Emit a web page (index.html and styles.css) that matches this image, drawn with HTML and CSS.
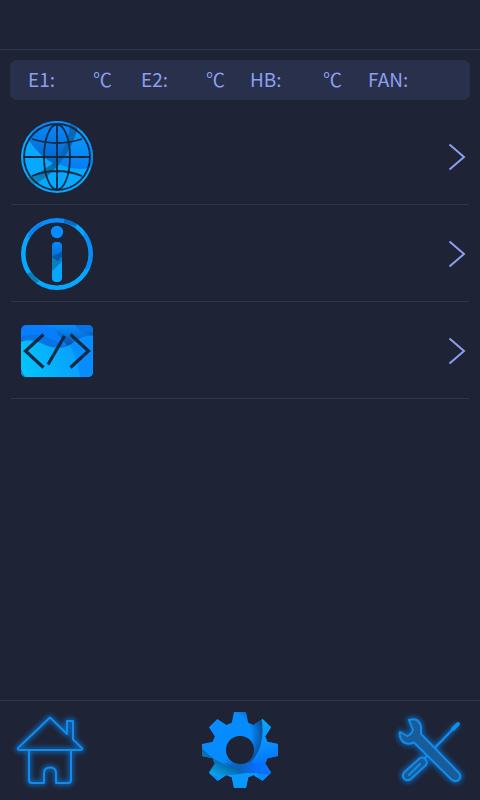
FILE: index.html
```html
<!DOCTYPE html>
<html lang="en">
<head>
<meta charset="utf-8">
<title>Printer settings</title>
<link rel="stylesheet" href="styles.css">
</head>
<body>
<header class="topbar"></header>
<main class="content">
  <div class="status">
    <span>E1:</span><span>℃</span><span>E2:</span><span>℃</span><span>HB:</span><span>℃</span><span>FAN:</span>
  </div>
  <div class="row">
    <svg class="icon" viewBox="0 0 72 72">
      <defs>
        <clipPath id="disc"><circle cx="36" cy="36" r="36"/></clipPath>
        <linearGradient id="g1" x1="0" y1="0" x2="0" y2="1"><stop offset="0" stop-color="#078cff"/><stop offset="1" stop-color="#0362c8"/></linearGradient>
        <linearGradient id="g2" x1="0" y1="0" x2="0" y2="1"><stop offset="0" stop-color="#08a4ff"/><stop offset="1" stop-color="#087cf0"/></linearGradient>
        <linearGradient id="g3" x1="1" y1="0" x2="0" y2="1"><stop offset="0" stop-color="#07609c"/><stop offset="1" stop-color="#079bd0"/></linearGradient>
      </defs>
      <g clip-path="url(#disc)">
        <rect width="72" height="72" fill="#06a9ff"/>
        <path d="M7 18L18 0H58Q53 25 37 45Q18 36 7 18Z" fill="url(#g1)"/>
        <path d="M49 0L59 0Q54 26 37 45L38 36Q49 19 49 0Z" fill="#0768b8"/>
        <path d="M58 0Q54 25 38 43Q54 51 72 46V0Z" fill="url(#g2)"/>
        <path d="M0 60Q22 51 36 39L38 43Q28 57 10 65Z" fill="url(#g3)"/>
      </g>
      <g fill="none" stroke="#142942" stroke-width="1.8">
        <circle cx="36" cy="36" r="33"/>
        <path d="M36 3V69M3 36H69M11 18Q36 26 61 18M11 55Q36 45 61 55"/>
        <ellipse cx="36" cy="36" rx="13" ry="32.5"/>
      </g>
    </svg>
    <svg class="chevron" viewBox="0 0 18 28"><path d="M1.5 1.5L16 14L1.5 26.5"/></svg>
  </div>
  <div class="row">
    <svg class="icon" viewBox="0 0 72 72">
      <defs>
        <mask id="ring"><circle cx="36" cy="36" r="33.7" fill="none" stroke="#fff" stroke-width="4.6"/></mask>
        <clipPath id="stem"><rect x="31" y="24" width="10" height="40" rx="4.5"/></clipPath>
      </defs>
      <g mask="url(#ring)">
        <rect width="72" height="72" fill="#06a7ff"/>
        <path d="M7 18L12 0H58L54 10Q28 19 7 18Z" fill="#078cff"/>
        <path d="M6 20L15 8L21 5Q16 15 7 20Z" fill="#0880ee"/>
        <path d="M43 0H58L55 8L43 5Z" fill="#0868cb"/>
        <path d="M63 10H72V49L64 52Z" fill="#078cf8"/>
        <path d="M3 57L10 54L18 63L13 67Z" fill="#087eb9"/>
      </g>
      <circle cx="36" cy="14" r="6.2" fill="#078cff"/>
      <g clip-path="url(#stem)">
        <rect x="30" y="22" width="12" height="44" fill="#06a7ff"/>
        <rect x="30" y="22" width="12" height="24" fill="url(#g1)"/>
        <path d="M30 39L37 43L42 37V40Q38 48 30 54Z" fill="#087fbb"/>
        <path d="M31 39L37 43L42 37V33Z" fill="#0758a5"/>
        <path d="M42 40Q38 49 30 54V64H42Z" fill="#06a7ff"/>
      </g>
    </svg>
    <svg class="chevron" viewBox="0 0 18 28"><path d="M1.5 1.5L16 14L1.5 26.5"/></svg>
  </div>
  <div class="row">
    <svg class="icon code" viewBox="0 0 72 52">
      <defs>
        <clipPath id="card"><rect width="72" height="52" rx="5"/></clipPath>
        <linearGradient id="c1" x1="0" y1=".6" x2="1" y2=".4"><stop offset="0" stop-color="#02c4fa"/><stop offset=".7" stop-color="#08a2ff"/><stop offset="1" stop-color="#0698ff"/></linearGradient>
        <linearGradient id="c2" x1=".2" y1="0" x2=".6" y2="1"><stop offset="0" stop-color="#0788fa"/><stop offset="1" stop-color="#0650a0"/></linearGradient>
        <linearGradient id="c3" x1="0" y1="0" x2="0" y2="1"><stop offset="0" stop-color="#088cff"/><stop offset="1" stop-color="#0665c8"/></linearGradient>
      </defs>
      <g clip-path="url(#card)">
        <rect width="72" height="52" fill="#087dff"/>
        <path d="M0 12Q12 7 25 12T47 22L44 27H0Z" fill="#0874e4"/>
        <path d="M24 0Q35 4 46 21L53 19Q61 11 72 11V0Z" fill="url(#c2)"/>
        <path d="M24 0H54Q60 9 72 10V13Q59 13 53 18Q41 4 24 0Z" fill="url(#c3)"/>
        <path d="M54 0Q60 9 72 7V0Z" fill="#0874e4"/>
        <path d="M0 17Q10 13 24 20Q40 27 52 18Q60 11 72 11V52H0Z" fill="url(#c1)"/>
        <path d="M49 20Q60 10 72 11V52H59Q57 34 49 20Z" fill="#068dff"/>
        <path d="M0 42Q0 48 5 52H0Z" fill="#087ce6"/>
      </g>
      <path d="M22.5 9.5L4.5 26L22.5 42.5M49.5 9.5L67.5 26L49.5 42.5M43.500 11L27 39.500" fill="none" stroke="#142942" stroke-width="3.2"/>
    </svg>
    <svg class="chevron" viewBox="0 0 18 28"><path d="M1.5 1.5L16 14L1.5 26.5"/></svg>
  </div>
</main>
<nav class="nav">
  <svg class="tab" viewBox="0 0 100 99">
    <defs>
      <path id="house" d="M50 16.500L18 47Q17 49 20 49H80Q83 49 82 47L73 38.500V20H67V33ZM29 49V79Q29 82 32 82H44V72Q44 66.500 50 66.500T56 72V82H68Q71 82 71 79V49"/>
    </defs>
    <use href="#house" class="halo"/>
    <use href="#house" class="neon"/>
  </svg>
  <svg class="tab" viewBox="0 0 100 99">
    <defs>
      <clipPath id="gear">
        <path d="M44 11H56L58.500 23H41.500Z"/>
        <path d="M44 11H56L58.500 23H41.500Z" transform="rotate(45 50 49)"/>
        <path d="M44 11H56L58.500 23H41.500Z" transform="rotate(90 50 49)"/>
        <path d="M44 11H56L58.500 23H41.500Z" transform="rotate(135 50 49)"/>
        <path d="M44 11H56L58.500 23H41.500Z" transform="rotate(180 50 49)"/>
        <path d="M44 11H56L58.500 23H41.500Z" transform="rotate(225 50 49)"/>
        <path d="M44 11H56L58.500 23H41.500Z" transform="rotate(270 50 49)"/>
        <path d="M44 11H56L58.500 23H41.500Z" transform="rotate(315 50 49)"/>
        <circle cx="50" cy="49" r="28.500"/>
      </clipPath>
      <linearGradient id="s1" gradientUnits="userSpaceOnUse" x1="34" y1="58" x2="25" y2="74"><stop offset="0" stop-color="#075a9c"/><stop offset="1" stop-color="#08a2e8"/></linearGradient>
      <radialGradient id="s2" gradientUnits="userSpaceOnUse" cx="38" cy="34" r="35"><stop offset=".65" stop-color="#07509a" stop-opacity="0"/><stop offset="1" stop-color="#07509a"/></radialGradient>
      <linearGradient id="s3" gradientUnits="userSpaceOnUse" x1="50" y1="66" x2="84" y2="66"><stop offset="0" stop-color="#0864bb"/><stop offset=".5" stop-color="#086cff"/><stop offset="1" stop-color="#087cff"/></linearGradient>
      <linearGradient id="s4" gradientUnits="userSpaceOnUse" x1="70" y1="20" x2="82" y2="66"><stop offset="0" stop-color="#08a8f5"/><stop offset=".5" stop-color="#0890ff"/><stop offset="1" stop-color="#076cff"/></linearGradient>
    </defs>
    <g clip-path="url(#gear)">
      <rect width="100" height="99" fill="#078cff"/>
      <path d="M70 10Q78 43 61 61L52 67L60 73H92V10Z" fill="url(#s4)"/>
      <path d="M42 10H70Q78 43 61 61L52 67Q38 64 30 55L50 49Z" fill="url(#s2)"/>
      <path d="M8 43Q27 66 54 68L58 73Q34 77 10 73Z" fill="url(#s1)"/>
      <path d="M32 60Q46 68 61 61L84 66L82 72H58Q43 70 32 60Z" fill="url(#s3)"/>
      <path d="M28 75Q44 74 55 72H68V90H28Z" fill="#0798ff"/>
    </g>
    <circle cx="50" cy="49" r="14" fill="#1e2336"/>
  </svg>
  <svg class="tab" viewBox="0 0 100 99">
    <defs>
      <path id="driver" d="M39 58Q42 55 45 58T46 64L32 77Q28 81 24.500 78T24.500 71Z"/>
      <path id="wrench" d="M29 19Q38 16 41 25V33L78.500 71.500Q82 75 79 78.500T71.500 78.500L34 41.500Q25 45 21 38Q19 34 20 31L27 35Q31 34 33 29Z"/>
    </defs>
    <g class="halo"><path d="M78 23L44 58"/><use href="#driver"/><use href="#wrench"/></g>
    <g class="neon">
      <path d="M78 23L73 28" stroke-width="4"/>
      <path d="M75 26L44 58" stroke-width="2.500"/>
      <use href="#driver" class="fill"/>
      <path d="M40 63L29 74"/>
      <use href="#wrench" class="fill"/>
    </g>
  </svg>
</nav>
</body>
</html>
```
FILE: styles.css
```css
* { box-sizing: border-box; }
body {
  margin: 0;
  height: 800px;
  display: flex;
  flex-direction: column;
  background: #1e2336;
  font-family: "Noto Sans CJK SC", sans-serif;
  overflow: hidden;
}
svg { display: block; }
.topbar { height: 50px; border-bottom: 1px solid #30374a; }
.content { flex: 1; padding: 10px 10px 0; }
.status {
  display: grid;
  grid-template-columns: 65px 48px 65px 44px 73px 45px 1fr;
  align-items: center;
  height: 40px;
  padding: 0 0 2px 18px;
  border-radius: 7px;
  background: #28304c;
  color: #8c9ff0;
  font-size: 19px;
  line-height: 38px;
  white-space: nowrap;
}
.row {
  display: flex;
  align-items: center;
  justify-content: space-between;
  height: 97px;
  margin: 0 1px;
  padding: 1px 3px 0 10px;
  border-bottom: 1px solid #30364a;
}
.status + .row { height: 105px; padding-top: 9px; }
.icon { width: 72px; height: 72px; }
.code { height: 52px; }
.chevron { width: 18px; height: 28px; fill: none; stroke: #8c9ff0; stroke-width: 2; }
.nav {
  display: flex;
  justify-content: space-between;
  height: 100px;
  border-top: 1px solid #30374a;
}
.tab { width: 100px; height: 99px; }
.neon { fill: none; stroke: #148bea; stroke-width: 2; stroke-linejoin: round; stroke-linecap: round; }
.neon .fill { fill: #185d99; }
.halo { fill: none; stroke: #0878d8; stroke-width: 5; stroke-linejoin: round; filter: blur(2.5px); opacity: .75; }
```
